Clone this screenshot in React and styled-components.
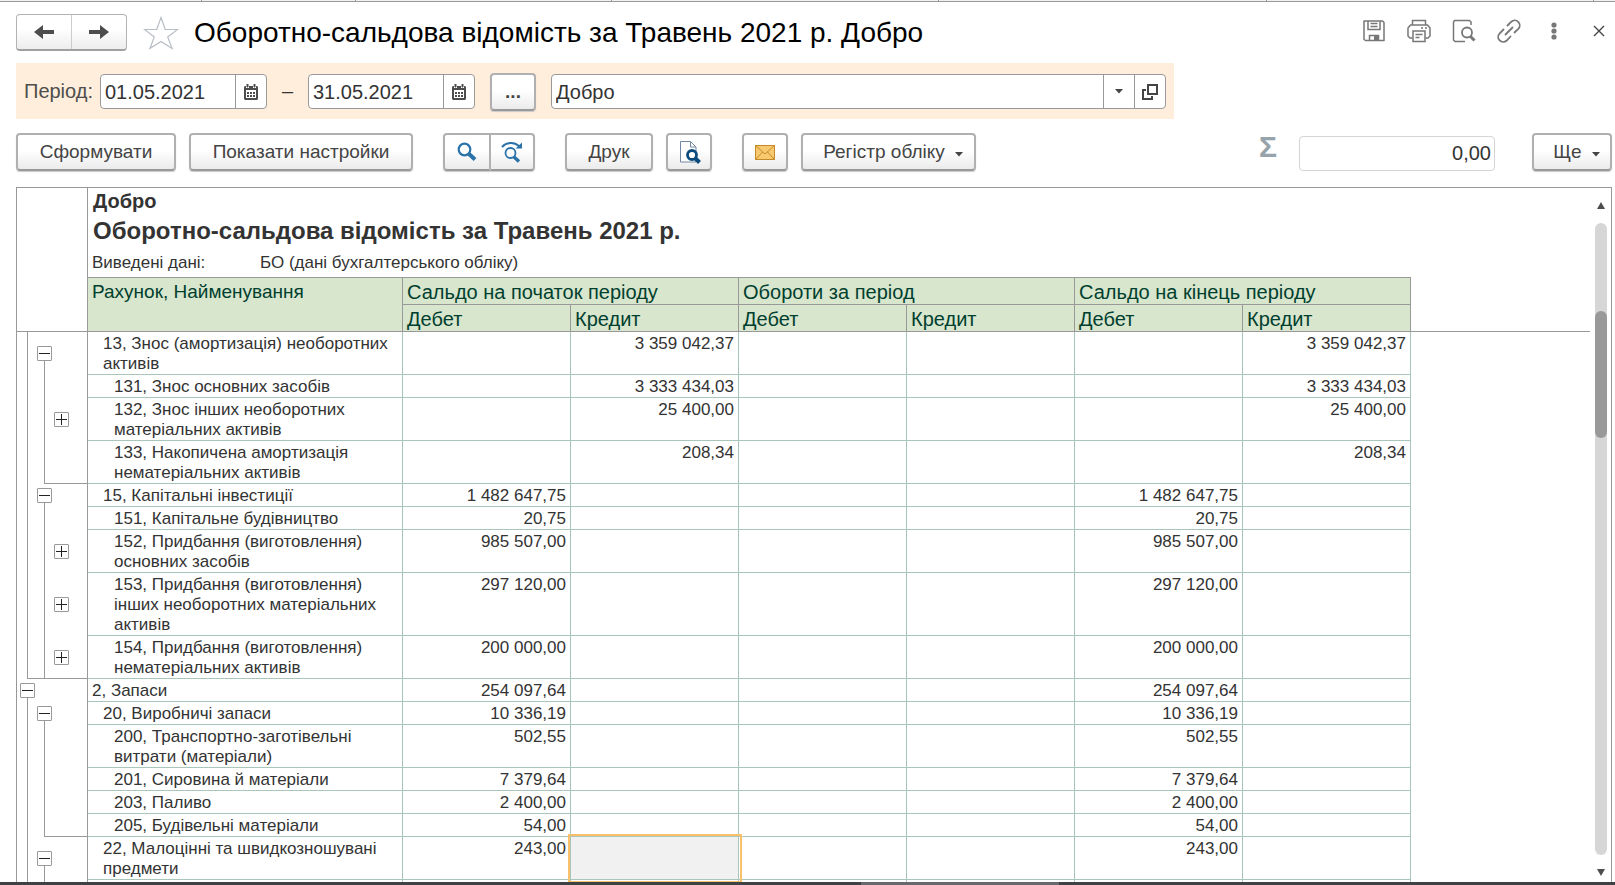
import React from 'react'
import styled, { createGlobalStyle, css } from 'styled-components'

const GlobalStyle = createGlobalStyle`
  * {
    box-sizing: border-box;
  }

  body {
    margin: 0;
    background: #ffffff;
    color: #333333;
    font-family: "Liberation Sans", Arial, sans-serif;
  }

  button, input {
    font-family: inherit;
    color: inherit;
  }
`

const Page = styled.div`
  display: flex;
  flex-direction: column;
  height: 100vh;
  overflow: hidden;
`

const TabStrip = styled.div`
  display: grid;
  grid-template-columns: 202fr 154fr 256fr 327fr 328fr 327fr 21fr;
  flex: none;
  height: 2px;
  background: #f2f2f2;
  border-bottom: 1px solid #999999;
`

const TabEdge = styled.span`
  border-right: 1px solid #999999;

  &:last-child {
    border-right: 0;
  }
`

const Header = styled.header`
  display: flex;
  align-items: center;
  flex: none;
  height: 61px;
  padding: 0 4px 0 16px;
`

const NavGroup = styled.nav`
  display: flex;
  width: 111px;
  height: 37px;
  border: 1px solid #b3b3b3;
  border-bottom: 2px solid #a0a0a0;
  border-radius: 4px;
  background: linear-gradient(#ffffff 40%, #ededed);
`

const NavButton = styled.button`
  display: flex;
  align-items: center;
  justify-content: center;
  flex: 1;
  padding: 0;
  border: 0;
  background: none;

  & + & {
    border-left: 1px solid #cccccc;
  }
`

const StarButton = styled.button`
  display: flex;
  margin: 0 15px 0 16px;
  padding: 0;
  border: 0;
  background: none;
`

const Title = styled.h1`
  flex: 1;
  margin: 0;
  color: #000000;
  font-size: 28px;
  font-weight: 400;
  line-height: 32px;
  white-space: nowrap;
`

const Actions = styled.div`
  display: flex;
  gap: 21px;
  padding-bottom: 3px;
`

const IconButton = styled.button`
  display: flex;
  align-items: center;
  justify-content: center;
  width: 24px;
  height: 24px;
  padding: 0;
  border: 0;
  background: none;
`

const PeriodPanel = styled.section`
  display: flex;
  align-items: center;
  flex: none;
  max-width: 1158px;
  height: 56px;
  margin-left: 16px;
  padding: 1px 8px 0;
  background: #ffeedb;
`

const Label = styled.label`
  width: 76px;
  color: #4d4d4d;
  font-size: 20px;
`

const Field = styled.div`
  display: flex;
  flex: ${p => (p.$grow ? '1' : '0 0 167px')};
  height: 35px;
  border: 1px solid #999999;
  border-radius: 4px;
  background: #ffffff;
  overflow: hidden;
`

const FieldInput = styled.input`
  flex: 1;
  min-width: 0;
  padding: 1px 4px 0;
  border: 0;
  background: none;
  font-size: 20px;
`

const FieldButton = styled.button`
  display: flex;
  align-items: center;
  justify-content: center;
  width: 31px;
  padding: 0;
  border: 0;
  border-left: 1px solid #999999;
  background: none;
`

const Dash = styled.span`
  width: 41px;
  font-size: 20px;
  text-align: center;
`

const Button = styled.button`
  display: flex;
  align-items: center;
  justify-content: center;
  gap: 10px;
  flex: none;
  width: ${p => p.$width}px;
  height: 38px;
  padding: 0;
  border: 2px solid #b0b0b0;
  border-bottom-color: #999999;
  border-radius: 4px;
  background: linear-gradient(#ffffff 45%, #ebebeb);
  box-shadow: 0 1px 1px #c8c8c8;
  color: #444444;
  font-size: 19px;
  white-space: nowrap;
`

const DotsButton = styled(Button)`
  margin: 0 15px;
  font-weight: 700;
`

const MenuButton = styled(Button)`
  padding-left: 9px;

  svg {
    margin-top: 4px;
  }
`

const Toolbar = styled.div`
  display: flex;
  align-items: center;
  gap: 30px;
  flex: none;
  padding: 14px 3px 16px 16px;
`

const ToolGroup = styled.div`
  display: flex;
  gap: 13px;
`

const SearchGroup = styled.div`
  display: flex;

  ${Button}:first-child {
    border-radius: 4px 0 0 4px;
  }

  ${Button}:last-child {
    border-left: 0;
    border-radius: 0 4px 4px 0;
  }
`

const SumGroup = styled.div`
  display: flex;
  align-items: center;
  gap: 22px;
  margin-left: auto;
  padding: 2px 7px 0 0;
`

const Sigma = styled.label`
  padding-bottom: 12px;
  color: #97a3aa;
  font-size: 30px;
  font-weight: 700;
  line-height: 24px;
`

const SumInput = styled.input`
  width: 196px;
  height: 35px;
  padding: 1px 3px 0;
  border: 1px solid #d4d4d4;
  border-radius: 4px;
  font-size: 20px;
  text-align: right;
`

const Frame = styled.main`
  display: flex;
  flex: 1;
  min-height: 0;
  margin: 0 3px 0 16px;
  border: 1px solid #999999;
  border-bottom: 0;
`

const Sheet = styled.div`
  flex: 1;
  min-width: 0;
  overflow: hidden;
`

const Table = styled.table`
  width: 100%;
  table-layout: fixed;
  border-spacing: 0;
`

const Col = styled.col`
  width: ${p => p.$width}px;
`

const Caption = styled.td`
  height: ${p => p.$height}px;
  padding: 0 5px;
  font-size: ${p => p.$size}px;
  font-weight: ${p => (p.$bold ? 700 : 400)};
  white-space: nowrap;
`

const InfoRow = styled.tr`
  td {
    padding-left: 4px;
    border-bottom: 1px solid #999999;
  }

  td:first-child, td:last-child {
    border-bottom: 0;
  }
`

const InfoLine = styled.div`
  display: grid;
  grid-template-columns: 168px 1fr;
`

const HeadGutter = styled.td`
  padding: 0;
  border-right: 1px solid #999999;
  border-bottom: ${p => (p.$last ? '1px solid #999999' : '0')};
`

const HeadCell = styled.th`
  height: 27px;
  padding: 2px 4px 0;
  border-right: 1px solid #999999;
  border-bottom: 1px solid #999999;
  background: #d8e6cd;
  color: #003f2f;
  font-size: ${p => (p.$account ? 19 : 20)}px;
  font-weight: 400;
  line-height: 24px;
  text-align: left;
  vertical-align: top;
  white-space: nowrap;
`

const HeadRest = styled.td`
  padding: 0;
  border-bottom: 1px solid #999999;
`

const cell = css`
  height: 23px;
  border-right: 1px solid #a9c6bb;
  border-bottom: 1px solid #a9c6bb;
  font-size: 17px;
  font-weight: 400;
  line-height: 20px;
  vertical-align: top;
`

const NameCell = styled.th`
  ${cell}
  padding: 2px 8px 0 ${p => 4 + p.$level * 11}px;
  text-align: left;
`

const AmountCell = styled.td`
  ${cell}
  padding: 2px 4px 0;
  text-align: right;
  white-space: nowrap;

  ${p => p.$selected && css`
    background: #f1f1f1;
    outline: 2px solid #fbc06c;
    outline-offset: 1px;
  `}
`

const GutterCell = styled.td`
  position: relative;
  height: 1px;
  padding: 0;
  border-right: 1px solid #999999;
`

const Tree = styled.div`
  display: grid;
  grid-template-columns: 17px 43px;
  height: 100%;
  padding-left: 10px;
`

const stems = { none: '0', full: '100%', half: '50%' }

const Stem = styled.span`
  border-bottom: ${p => (p.$end ? '1px solid #999999' : '0')};
  background: linear-gradient(#999999, #999999) left bottom / 1px ${p => stems[p.$line]} no-repeat;
`

// sits over the tree lines, one step per level
const Toggle = styled.button`
  position: absolute;
  top: calc(50% - 8px);
  left: ${p => 3 + p.$level * 17}px;
  display: flex;
  width: 15px;
  height: 15px;
  padding: 0;
  border: 1px solid #999999;
  border-radius: 1px;
  background: #ffffff;
`

const ScrollBar = styled.div`
  display: flex;
  flex-direction: column;
  align-items: center;
  width: 21px;
  padding-top: 8px;
`

const ScrollButton = styled.button`
  display: flex;
  align-items: center;
  justify-content: center;
  width: 12px;
  height: 27px;
  padding: 0 0 9px;
  border: 0;
  background: none;

  &:last-child {
    padding: 8px 0 0;
  }
`

const Track = styled.div`
  display: grid;
  grid-template-rows: 14% 20% 1fr;
  flex: 1;
  width: 12px;
  border-radius: 6px;
  background: #d6d6d6;
`

const Thumb = styled.div`
  grid-row: 2;
  border-radius: 6px;
  background: #999999;
`

const BottomBar = styled.footer`
  display: grid;
  grid-template-columns: 861fr 198fr 556fr;
  flex: none;
  height: 3px;
  background: #3f4244;
`

const BottomActive = styled.span`
  grid-column: 2;
  background: #68696d;
`

const Arrow = ({ right }) => (
  <svg width="22" height="16" viewBox="0 0 22 16">
    <path
      d={right ? 'M1 6h11V1l9 7-9 7v-5H1z' : 'M21 6H10V1L1 8l9 7v-5h11z'}
      fill="#4d4d4d"
    />
  </svg>
)

const Star = () => (
  <svg width="36" height="34" viewBox="0 0 36 34" fill="none" stroke="#b8bec6" strokeWidth="1.2">
    <path d="M18 1.500l4.200 11.800 12.300.2-9.800 7.500 4.400 11.500L18 25.500 6.900 32.500l4.400-11.500L1.500 13.500l12.300-.2z" />
  </svg>
)

const SaveIcon = () => (
  <svg width="24" height="24" viewBox="0 0 24 24" fill="none" stroke="#777777" strokeWidth="1.500">
    <path d="M2.500 2h18l1.500 1.500v18H3.500L2 20.500V2z" strokeLinejoin="round" />
    <path d="M6 2v8.500h12V2M8.500 4.500h7M8.500 7.500h7M7.500 22v-5.500h9V22" />
    <path d="M12 17h4v5h-4z" fill="#777777" stroke="none" />
  </svg>
)

const PrintIcon = () => (
  <svg width="24" height="24" viewBox="0 0 24 24" fill="none" stroke="#777777" strokeWidth="1.500">
    <path d="M5.500 6V1.500h13V6M5.500 19H3l-2-2V9l2.500-3h17L23 9v8l-2 2h-2.500" strokeLinejoin="round" />
    <path d="M6 12h12v10.500H6zM8.500 15.500h7M8.500 18.500h4M14 9h2M18 9h2" />
  </svg>
)

const PreviewIcon = () => (
  <svg width="24" height="24" viewBox="0 0 24 24" fill="none" stroke="#777777">
    <path d="M19 6V3l-1.500-1.500h-15L1.500 3v18l1.500 1.500h10" strokeWidth="1.500" />
    <circle cx="15" cy="13.500" r="5" strokeWidth="1.800" />
    <path d="M18.500 17.500l4 4" strokeWidth="3" />
  </svg>
)

const LinkIcon = () => (
  <svg width="24" height="24" viewBox="0 0 24 24" fill="none" stroke="#777777" strokeWidth="1.800" strokeLinecap="round">
    <path d="M8.500 15.500l7-7" />
    <path d="M10.500 6.500l3.600-3.600a5 5 0 0 1 7.200 7L17.500 13.500" />
    <path d="M6.500 10.500l-3.800 3.800a5 5 0 0 0 7 7.200l3.800-4" />
  </svg>
)

const MoreIcon = () => (
  <svg width="24" height="24" viewBox="0 0 24 24" fill="#777777">
    <circle cx="12" cy="6" r="2.600" />
    <circle cx="12" cy="12" r="2.600" />
    <circle cx="12" cy="18" r="2.600" />
  </svg>
)

const CloseIcon = () => (
  <svg width="24" height="24" viewBox="0 0 24 24" stroke="#444444" strokeWidth="1.400">
    <path d="M7 7l10 10M17 7L7 17" />
  </svg>
)

const CalendarIcon = () => (
  <svg width="14" height="16" viewBox="0 0 14 16">
    <path d="M0 3l1-1h12l1 1v12l-1 1H1l-1-1z" fill="#4d4d4d" />
    <path d="M2 1h3v3H2zM9 1h3v3H9z" fill="#ffffff" />
    <path d="M3 0h1v3H3zM10 0h1v3h-1z" fill="#4d4d4d" stroke="#4d4d4d" />
    <path d="M2 6h10v8H2z" fill="#ffffff" />
    <path d="M3 8h2v2H3zM6 8h2v2H6zM9 8h2v2H9zM3 11h2v2H3zM6 11h2v2H6zM9 11h2v2H9z" fill="#4d4d4d" />
  </svg>
)

const Caret = () => (
  <svg width="8" height="5" viewBox="0 0 8 5">
    <path d="M0 0h8L4 4.500z" fill="#444444" />
  </svg>
)

const OpenIcon = () => (
  <svg width="16" height="16" viewBox="0 0 16 16" fill="none" stroke="#444444" strokeWidth="2">
    <path d="M6 1h9v9H6z" />
    <path d="M4 6H1v9h9v-3" />
  </svg>
)

const SearchIcon = () => (
  <svg width="20" height="20" viewBox="0 0 20 20" fill="none" stroke="#2a72a8">
    <circle cx="7.500" cy="7.500" r="5.800" strokeWidth="2.200" />
    <path d="M12 12l6 5.500" strokeWidth="4" />
  </svg>
)

const SearchNextIcon = () => (
  <svg width="22" height="22" viewBox="0 0 22 22" fill="none" stroke="#2a72a8">
    <path d="M1 6C5.500 1 13 .5 18 5" strokeWidth="2" />
    <path d="M21 1.500v6h-6.500z" fill="#2a72a8" stroke="none" />
    <circle cx="9.500" cy="12" r="5" strokeWidth="1.800" />
    <path d="M13 16l5 4.500" strokeWidth="3.400" />
  </svg>
)

const FindInPageIcon = () => (
  <svg width="24" height="24" viewBox="0 0 24 24" fill="none">
    <path d="M3.500 1.500h10l5.500 5.500v15h-15.500z" fill="#ffffff" stroke="#7289a3" />
    <path d="M13.500 1.500v5.500H19" stroke="#7289a3" />
    <circle cx="15" cy="15" r="4.500" fill="#ffffff" stroke="#0b4a7d" strokeWidth="2.800" />
    <path d="M18.500 18.500l4 4" stroke="#0b4a7d" strokeWidth="4" />
  </svg>
)

const MailIcon = () => (
  <svg width="20" height="15" viewBox="0 0 20 15" stroke="#c58a27">
    <path d="M.5.5h19v14H.5z" fill="#f8c96f" />
    <path d="M.5.5L10 9 19.500.5M.5 14.500l7-7.500M19.500 14.500l-7-7.500" fill="none" />
  </svg>
)

const ToggleIcon = ({ open }) => (
  <svg width="13" height="13" viewBox="0 0 13 13" stroke="#222222">
    <path d={open ? 'M1 6.500h11' : 'M1 6.500h11M6.500 1v11'} />
  </svg>
)

const ScrollArrow = ({ down }) => (
  <svg width="8" height="7" viewBox="0 0 8 7">
    <path d={down ? 'M0 0h8L4 7z' : 'M0 7h8L4 0z'} fill="#4d4d4d" />
  </svg>
)

// level: depth of the account, tree: [outer line, inner line], end: which line closes here
const rows = [
  { name: '13, Знос (амортизація) необоротних активів', level: 1, credit: '3 359 042,37', toggle: 'open', tree: ['full', 'half'] },
  { name: '131, Знос основних засобів', level: 2, credit: '3 333 434,03', tree: ['full', 'full'] },
  { name: '132, Знос інших необоротних матеріальних активів', level: 2, credit: '25 400,00', toggle: 'closed', tree: ['full', 'full'] },
  { name: '133, Накопичена амортизація нематеріальних активів', level: 2, credit: '208,34', tree: ['full', 'full'], end: 'inner' },
  { name: '15, Капітальні інвестиції', level: 1, debit: '1 482 647,75', toggle: 'open', tree: ['full', 'half'] },
  { name: '151, Капітальне будівництво', level: 2, debit: '20,75', tree: ['full', 'full'] },
  { name: '152, Придбання (виготовлення) основних засобів', level: 2, debit: '985 507,00', toggle: 'closed', tree: ['full', 'full'] },
  { name: '153, Придбання (виготовлення) інших необоротних матеріальних активів', level: 2, debit: '297 120,00', toggle: 'closed', tree: ['full', 'full'] },
  { name: '154, Придбання (виготовлення) нематеріальних активів', level: 2, debit: '200 000,00', toggle: 'closed', tree: ['full', 'full'], end: 'outer' },
  { name: '2, Запаси', level: 0, debit: '254 097,64', toggle: 'open', tree: ['half', 'none'] },
  { name: '20, Виробничі запаси', level: 1, debit: '10 336,19', toggle: 'open', tree: ['full', 'half'] },
  { name: '200, Транспортно-заготівельні витрати (матеріали)', level: 2, debit: '502,55', tree: ['full', 'full'] },
  { name: '201, Сировина й матеріали', level: 2, debit: '7 379,64', tree: ['full', 'full'] },
  { name: '203, Паливо', level: 2, debit: '2 400,00', tree: ['full', 'full'] },
  { name: '205, Будівельні матеріали', level: 2, debit: '54,00', tree: ['full', 'full'], end: 'inner' },
  { name: '22, Малоцінні та швидкозношувані предмети', level: 1, debit: '243,00', toggle: 'open', tree: ['full', 'half'], selected: true },
  { name: '', level: 2, tree: ['full', 'full'] },
]

const groups = ['Сальдо на початок періоду', 'Обороти за період', 'Сальдо на кінець періоду']

const AccountRow = ({ row }) => (
  <tr>
    <GutterCell>
      <Tree>
        <Stem $line={row.tree[0]} $end={row.end === 'outer'} />
        <Stem $line={row.tree[1]} $end={Boolean(row.end)} />
      </Tree>
      {row.toggle && (
        <Toggle
          type="button"
          $level={row.level}
          aria-label={row.toggle === 'open' ? 'Згорнути' : 'Розгорнути'}
        >
          <ToggleIcon open={row.toggle === 'open'} />
        </Toggle>
      )}
    </GutterCell>
    <NameCell scope="row" $level={row.level}>{row.name}</NameCell>
    <AmountCell>{row.debit}</AmountCell>
    <AmountCell $selected={row.selected}>{row.credit}</AmountCell>
    <AmountCell />
    <AmountCell />
    <AmountCell>{row.debit}</AmountCell>
    <AmountCell>{row.credit}</AmountCell>
    <td />
  </tr>
)

const Report = () => (
  <Table>
    <colgroup>
      <Col $width={71} />
      <Col $width={315} />
      {[0, 1, 2, 3, 4, 5].map(i => <Col key={i} $width={168} />)}
      <col />
    </colgroup>
    <thead>
      <tr>
        <HeadGutter />
        <Caption colSpan={7} $height={26} $size={20} $bold>Добро</Caption>
        <td />
      </tr>
      <tr>
        <HeadGutter />
        <Caption colSpan={7} $height={34} $size={24} $bold>
          Оборотно-сальдова відомість за Травень 2021 р.
        </Caption>
        <td />
      </tr>
      <InfoRow>
        <HeadGutter />
        <Caption colSpan={7} $height={30} $size={17}>
          <InfoLine>
            <span>Виведені дані:</span>
            <span>БО (дані бухгалтерського обліку)</span>
          </InfoLine>
        </Caption>
        <td />
      </InfoRow>
      <tr>
        <HeadGutter />
        <HeadCell rowSpan={2} scope="col" $account>Рахунок, Найменування</HeadCell>
        {groups.map(g => <HeadCell key={g} colSpan={2} scope="colgroup">{g}</HeadCell>)}
        <td />
      </tr>
      <tr>
        <HeadGutter $last />
        {groups.map(g => (
          <React.Fragment key={g}>
            <HeadCell scope="col">Дебет</HeadCell>
            <HeadCell scope="col">Кредит</HeadCell>
          </React.Fragment>
        ))}
        <HeadRest />
      </tr>
    </thead>
    <tbody>
      {rows.map(row => <AccountRow key={row.name} row={row} />)}
    </tbody>
  </Table>
)

const App = () => {
  return (
    <Page>
      <GlobalStyle />
      <TabStrip>
        {[0, 1, 2, 3, 4, 5, 6].map(i => <TabEdge key={i} />)}
      </TabStrip>

      <Header>
        <NavGroup>
          <NavButton type="button" aria-label="Назад"><Arrow /></NavButton>
          <NavButton type="button" aria-label="Вперед"><Arrow right /></NavButton>
        </NavGroup>
        <StarButton type="button" aria-label="Вибране"><Star /></StarButton>
        <Title>Оборотно-сальдова відомість за Травень 2021 р. Добро</Title>
        <Actions>
          <IconButton type="button" aria-label="Зберегти"><SaveIcon /></IconButton>
          <IconButton type="button" aria-label="Друк"><PrintIcon /></IconButton>
          <IconButton type="button" aria-label="Перегляд"><PreviewIcon /></IconButton>
          <IconButton type="button" aria-label="Посилання"><LinkIcon /></IconButton>
          <IconButton type="button" aria-label="Меню"><MoreIcon /></IconButton>
          <IconButton type="button" aria-label="Закрити"><CloseIcon /></IconButton>
        </Actions>
      </Header>

      <PeriodPanel>
        <Label htmlFor="from">Період:</Label>
        <Field>
          <FieldInput id="from" defaultValue="01.05.2021" />
          <FieldButton type="button" aria-label="Календар"><CalendarIcon /></FieldButton>
        </Field>
        <Dash>–</Dash>
        <Field>
          <FieldInput aria-label="Кінець періоду" defaultValue="31.05.2021" />
          <FieldButton type="button" aria-label="Календар"><CalendarIcon /></FieldButton>
        </Field>
        <DotsButton type="button" $width={46}>...</DotsButton>
        <Field $grow>
          <FieldInput aria-label="Організація" defaultValue="Добро" />
          <FieldButton type="button" aria-label="Вибрати"><Caret /></FieldButton>
          <FieldButton type="button" aria-label="Відкрити"><OpenIcon /></FieldButton>
        </Field>
      </PeriodPanel>

      <Toolbar>
        <ToolGroup>
          <Button type="button" $width={160}>Сформувати</Button>
          <Button type="button" $width={224}>Показати настройки</Button>
        </ToolGroup>
        <SearchGroup>
          <Button type="button" $width={48} aria-label="Знайти"><SearchIcon /></Button>
          <Button type="button" $width={44} aria-label="Знайти далі"><SearchNextIcon /></Button>
        </SearchGroup>
        <ToolGroup>
          <Button type="button" $width={88}>Друк</Button>
          <Button type="button" $width={46} aria-label="Попередній перегляд"><FindInPageIcon /></Button>
        </ToolGroup>
        <ToolGroup>
          <Button type="button" $width={46} aria-label="Надіслати"><MailIcon /></Button>
          <MenuButton type="button" $width={175}>Регістр обліку <Caret /></MenuButton>
        </ToolGroup>
        <SumGroup>
          <Sigma htmlFor="sum">Σ</Sigma>
          <SumInput id="sum" defaultValue="0,00" />
        </SumGroup>
        <MenuButton type="button" $width={80}>Ще <Caret /></MenuButton>
      </Toolbar>

      <Frame>
        <Sheet>
          <Report />
        </Sheet>
        <ScrollBar>
          <ScrollButton type="button" aria-label="Вгору"><ScrollArrow /></ScrollButton>
          <Track><Thumb /></Track>
          <ScrollButton type="button" aria-label="Вниз"><ScrollArrow down /></ScrollButton>
        </ScrollBar>
      </Frame>

      <BottomBar><BottomActive /></BottomBar>
    </Page>
  )
}

export default App
